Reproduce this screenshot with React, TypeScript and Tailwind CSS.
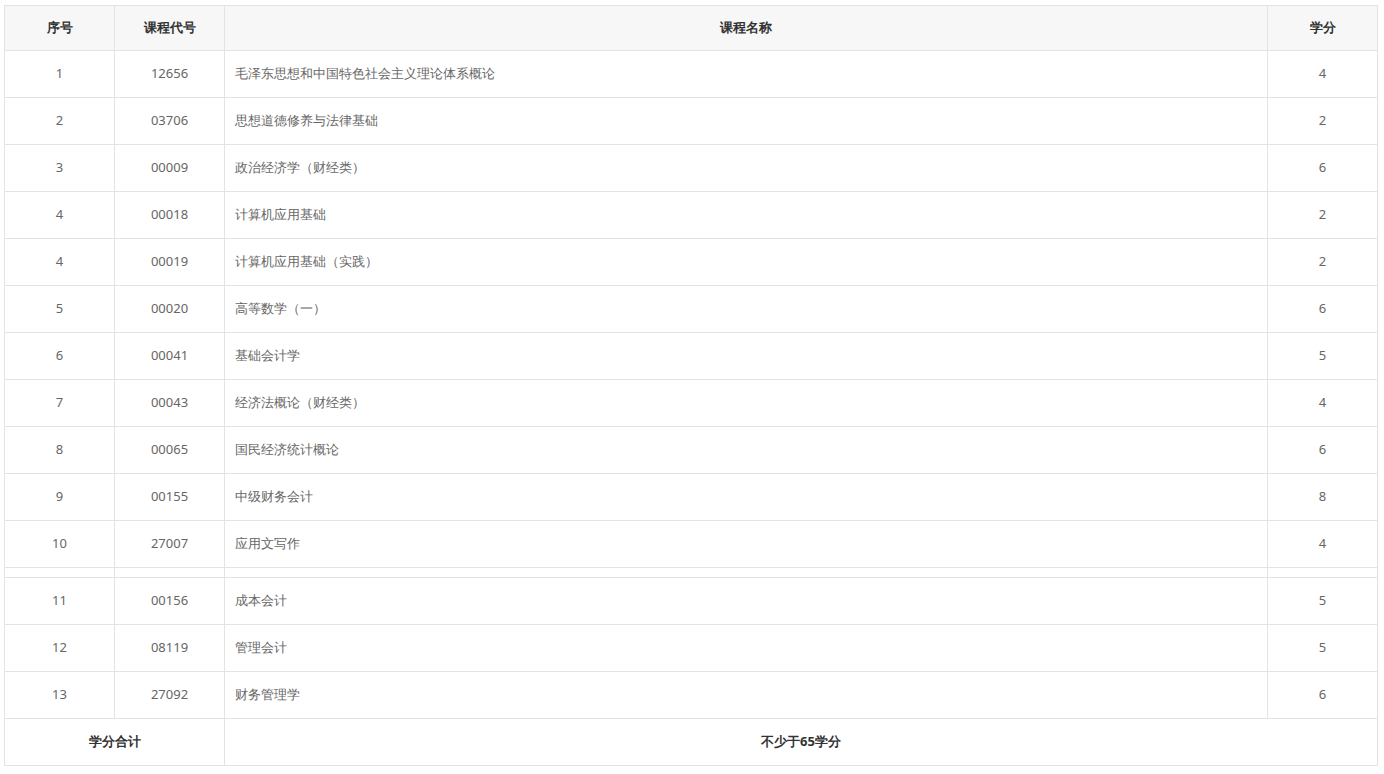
const rows: [string, string, string, string][] = [
  ['1', '12656', '毛泽东思想和中国特色社会主义理论体系概论', '4'],
  ['2', '03706', '思想道德修养与法律基础', '2'],
  ['3', '00009', '政治经济学（财经类）', '6'],
  ['4', '00018', '计算机应用基础', '2'],
  ['4', '00019', '计算机应用基础（实践）', '2'],
  ['5', '00020', '高等数学（一）', '6'],
  ['6', '00041', '基础会计学', '5'],
  ['7', '00043', '经济法概论（财经类）', '4'],
  ['8', '00065', '国民经济统计概论', '6'],
  ['9', '00155', '中级财务会计', '8'],
  ['10', '27007', '应用文写作', '4'],
];

const rows2: [string, string, string, string][] = [
  ['11', '00156', '成本会计', '5'],
  ['12', '08119', '管理会计', '5'],
  ['13', '27092', '财务管理学', '6'],
];

const cell = 'border border-[#e3e3e3] px-[10px]';

function Row({ r }: { r: [string, string, string, string] }) {
  return (
    <tr className="h-[47px]">
      <td className={`${cell} text-center`}>{r[0]}</td>
      <td className={`${cell} text-center`}>{r[1]}</td>
      <td className={cell}>{r[2]}</td>
      <td className={`${cell} text-center`}>{r[3]}</td>
    </tr>
  );
}

export default function App() {
  return (
    <div className="bg-white min-h-[774px] pt-[5px] pl-[4px] pr-[6px] font-['Open_Sans','Noto_Sans_CJK_SC',sans-serif] text-[13px] text-[#666]">
      <table className="w-[1374px] border-collapse table-fixed">
        <colgroup>
          <col className="w-[110px]" />
          <col className="w-[110px]" />
          <col />
          <col className="w-[110px]" />
        </colgroup>
        <thead>
          <tr className="h-[45px] bg-[#f7f7f7] text-[#333] font-bold">
            <th className={cell}>序号</th>
            <th className={cell}>课程代号</th>
            <th className={cell}>课程名称</th>
            <th className={cell}>学分</th>
          </tr>
        </thead>
        <tbody>
          {rows.map((r, i) => (
            <Row key={i} r={r} />
          ))}
          <tr className="h-[10px]">
            <td className={`${cell} p-0`}></td>
            <td className={`${cell} p-0`}></td>
            <td className={`${cell} p-0`}></td>
            <td className={`${cell} p-0`}></td>
          </tr>
          {rows2.map((r, i) => (
            <Row key={i} r={r} />
          ))}
          <tr className="h-[47px] text-[#333] font-bold">
            <td colSpan={2} className={`${cell} text-center`}>学分合计</td>
            <td colSpan={2} className={`${cell} text-center`}>不少于65学分</td>
          </tr>
        </tbody>
      </table>
    </div>
  );
}
